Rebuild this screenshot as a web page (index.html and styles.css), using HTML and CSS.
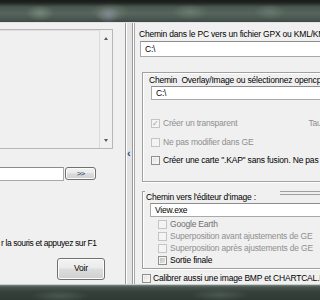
FILE: index.html
```html
<!DOCTYPE html>
<html>
<head>
<meta charset="utf-8">
<link rel="stylesheet" href="styles.css">
</head>
<body>
<div class="desk-top"></div>
<div class="win">
  <div class="left">
    <div class="list">
      <div class="list-body"></div>
      <div class="vscroll">
        <span class="arr-up"></span>
        <span class="arr-down"></span>
      </div>
    </div>
    <div class="row-input">
      <div class="field short"></div>
      <div class="btn small">&gt;&gt;</div>
    </div>
    <div class="hint">r la souris et appuyez sur F1</div>
    <div class="btn voir">Voir</div>
  </div>
  <div class="split"><span class="split-arrow">&lsaquo;</span></div>
  <div class="right">
    <div class="lbl top-lbl">Chemin dans le PC vers un fichier GPX ou KML/KMZ</div>
    <div class="field wide1">C:\</div>
    <div class="group g1">
      <div class="lbl g1-lbl">Chemin &nbsp;Overlay/Image ou sélectionnez opencpn</div>
      <div class="field wide2">C:\</div>
      <div class="chk-row r1"><span class="cb dis checked">&#10003;</span><span class="dis-txt">Créer un transparent</span><span class="dis-txt tau">Tau</span></div>
      <div class="chk-row r2"><span class="cb dis"></span><span class="dis-txt">Ne pas modifier dans GE</span></div>
      <div class="chk-row r3"><span class="cb"></span><span>Créer une carte ".KAP" sans fusion. Ne pas utiliser</span></div>
    </div>
    <div class="group g2">
      <div class="g2-head"><span class="g2-corner"></span><span class="lbl g2-lbl">Chemin vers l'éditeur d'image :</span><span class="g2-line"></span></div>
      <div class="field wide3">View.exe</div>
      <div class="chk-row s1"><span class="cb dis"></span><span class="dis-txt dark">Google Earth</span></div>
      <div class="chk-row s2"><span class="cb dis"></span><span class="dis-txt">Superposition avant ajustements de GE</span></div>
      <div class="chk-row s2"><span class="cb dis"></span><span class="dis-txt">Superposition après ajustements de GE</span></div>
      <div class="chk-row s2"><span class="cb grey"></span><span>Sortie finale</span></div>
    </div>
    <div class="chk-row calib"><span class="cb"></span><span>Calibrer aussi une image BMP et CHARTCAL.DIR</span></div>
  </div>
</div>
<div class="desk-bottom"></div>
</body>
</html>
```

FILE: styles.css
```css
html, body {
  margin: 0;
  padding: 0;
  width: 320px;
  height: 300px;
  overflow: hidden;
  background: #f0f0f0;
  font-family: "Liberation Sans", Arial, sans-serif;
  font-size: 8.5px;
  letter-spacing: -0.2px;
  color: #000;
}

.desk-top {
  height: 22px;
  background:
    radial-gradient(ellipse 14px 8px at 40px 13px, rgba(150,165,150,0.5), transparent),
    radial-gradient(ellipse 20px 9px at 110px 12px, rgba(140,155,145,0.45), transparent),
    radial-gradient(ellipse 12px 8px at 108px 15px, rgba(160,150,190,0.5), transparent),
    radial-gradient(ellipse 18px 8px at 190px 12px, rgba(130,150,140,0.45), transparent),
    radial-gradient(ellipse 16px 8px at 270px 12px, rgba(130,150,140,0.4), transparent),
    linear-gradient(to bottom, #181a18 0, #222824 3px, #4a5850 7px, #56655c 13px, #4b5a52 18px, #3e4a44 22px);
}

.win {
  height: 261px;
  border-top: 1px solid #dde3e6;
  display: flex;
  background: #f0f0f0;
}

.left {
  width: 125px;
  flex: none;
  display: flex;
  flex-direction: column;
  align-items: flex-start;
}

.list {
  margin-top: 6px;
  width: 112px;
  height: 118px;
  border: 1px solid #b7b7b7;
  border-left: none;
  display: flex;
  background: #f0f0f0;
  box-shadow: inset 0 1px 0 #e0e0e0;
}
.list-body {
  flex: 1;
  border-right: 1px solid #dadada;
}
.vscroll {
  width: 12px;
  position: relative;
  background: #f0f0f0;
}
.arr-up, .arr-down {
  position: absolute;
  left: 4px;
  width: 0;
  height: 0;
  border-left: 2.5px solid transparent;
  border-right: 2.5px solid transparent;
}
.arr-up { top: 7px; border-bottom: 3px solid #5a5a5a; }
.arr-down { bottom: 6px; border-top: 3px solid #5a5a5a; }

.row-input {
  margin-top: 18px;
  display: flex;
  align-items: flex-start;
}
.field {
  background: #fff;
  border: 1px solid #a9a9a9;
  border-top-color: #8c8c8c;
  box-sizing: border-box;
  white-space: nowrap;
  overflow: hidden;
  padding-left: 4px;
  line-height: 12px;
}
.field.short {
  width: 64px;
  height: 14px;
  border-left: none;
}

.btn {
  box-sizing: border-box;
  border: 1px solid #707070;
  border-radius: 3px;
  background: linear-gradient(to bottom, #f2f2f2 0, #ebebeb 45%, #dddddd 50%, #cfcfcf 100%);
  box-shadow: inset 0 0 0 1px #fcfcfc;
  text-align: center;
  color: #000;
}
.btn.small {
  margin-left: 1px;
  width: 31px;
  height: 13px;
  line-height: 11px;
  font-size: 8px;
  letter-spacing: -1px;
  color: #1a2a5a;
}
.hint {
  margin-top: 57px;
  margin-left: 1px;
  line-height: 11px;
  white-space: nowrap;
  letter-spacing: -0.4px;
}
.btn.voir {
  margin-top: 9px;
  margin-left: 57px;
  width: 48px;
  height: 22px;
  line-height: 19px;
}

.split {
  width: 10px;
  flex: none;
  box-sizing: border-box;
  border-left: 1px solid #9a9a9a;
  border-right: 1px solid #a8a8a8;
  background: linear-gradient(to right, #ffffff 0, #ffffff 1px, #e3e3e3 1px, #e3e3e3 6px, #9a9a9a 6px, #9a9a9a 7px, #ffffff 7px);
  position: relative;
}
.split-arrow {
  position: absolute;
  left: 1px;
  top: 125px;
  font-size: 11px;
  line-height: 11px;
  font-weight: bold;
  color: #1e4c8a;
}

.right {
  flex: 1;
  min-width: 0;
  overflow: hidden;
  display: flex;
  flex-direction: column;
  align-items: flex-start;
}
.lbl {
  white-space: nowrap;
  line-height: 11px;
}
.top-lbl {
  margin-top: 6px;
  margin-left: 4px;
}
.field.wide1 {
  margin-top: 1px;
  margin-left: 5px;
  width: 200px;
  height: 16px;
  line-height: 14px;
}

.group {
  box-sizing: border-box;
  width: 200px;
  margin-left: 7px;
  display: flex;
  flex-direction: column;
  align-items: flex-start;
}
.g1 {
  margin-top: 15px;
  height: 110px;
  border-top: 1px solid #a0a0a0;
  border-left: 1px solid #a0a0a0;
  border-bottom: 1px solid #a0a0a0;
  box-shadow: inset 1px 1px 0 #ffffff, 0 1px 0 #ffffff;
}
.g1-lbl {
  margin-top: 2px;
  margin-left: 6px;
}
.field.wide2 {
  margin-top: 0;
  margin-left: 8px;
  width: 200px;
  height: 14px;
}

.chk-row {
  display: flex;
  align-items: center;
  white-space: nowrap;
  line-height: 11px;
}
.cb {
  width: 9px;
  height: 9px;
  box-sizing: border-box;
  border: 1px solid #8e8f8f;
  background: linear-gradient(135deg, #dcdcdc 0, #f4f4f4 70%, #ffffff 100%);
  box-shadow: inset 0 0 0 1px #f4f4f4;
  margin-right: 3px;
  flex: none;
  font-size: 8px;
  line-height: 7px;
  text-align: center;
  color: #a0a0a0;
  letter-spacing: 0;
}
.cb.dis {
  border-color: #c4c4c4;
  background: #f4f4f4;
}
.cb.grey {
  background: linear-gradient(135deg, #b8b8b8 0, #d8d8d8 60%, #eeeeee 100%);
}
.dis-txt { color: #8f8f8f; }
.dis-txt.dark { color: #6f6f6f; }
.tau { margin-left: 71px; }

.r1 { margin-top: 18px; margin-left: 8px; }
.r2 { margin-top: 8px; margin-left: 8px; }
.r3 { margin-top: 7px; margin-left: 8px; }

.g2 {
  margin-top: 9px;
  height: 78px;
  border-left: 1px solid #a0a0a0;
  border-bottom: 1px solid #a0a0a0;
  box-shadow: inset 1px 0 0 #ffffff, 0 1px 0 #ffffff;
}
.g2-head {
  display: flex;
  align-items: flex-start;
  width: 100%;
  height: 11px;
}
.g2-corner {
  width: 2px;
  height: 1px;
  background: #a0a0a0;
  flex: none;
}
.g2-lbl {
  margin-left: 1px;
  margin-top: 1px;
}
.g2-line {
  margin-left: 24px;
  flex: 1;
  height: 2px;
  border-top: 1px solid #a0a0a0;
  border-bottom: 1px solid #a0a0a0;
}
.field.wide3 {
  margin-top: 1px;
  margin-left: 7px;
  width: 200px;
  height: 14px;
}
.s1 { margin-top: 2px; margin-left: 15px; }
.s2 { margin-top: 1px; margin-left: 15px; }

.calib {
  margin-top: 4px;
  margin-left: 7px;
}
.calib .cb { margin-right: 2px; }

.desk-bottom {
  height: 16px;
  background:
    radial-gradient(ellipse 30px 6px at 60px 12px, rgba(110,125,115,0.4), transparent),
    radial-gradient(ellipse 30px 6px at 220px 11px, rgba(110,125,115,0.4), transparent),
    linear-gradient(to bottom, #c9cccc 0, #c9cccc 1px, #7a8580 1px, #4a5650 3px, #35403b 8px, #2f3a35 16px);
}
```
